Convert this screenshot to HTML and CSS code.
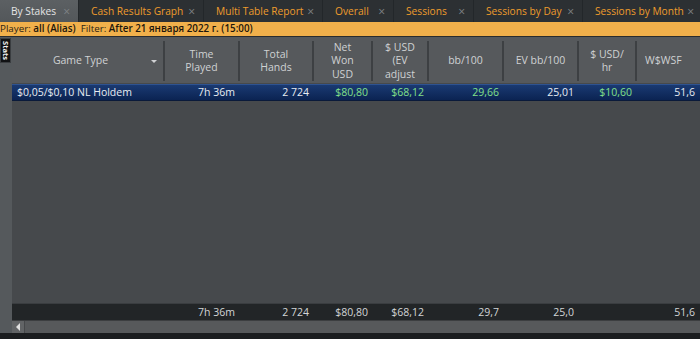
FILE: index.html
```html
<!DOCTYPE html>
<html lang="en">
<head>
  <meta charset="UTF-8">
  <title>By Stakes</title>
  <link rel="stylesheet" href="styles.css">
</head>
<body>
<div class="tabs">
  <div class="tab tab-active">By Stakes <span class="tab-close">&times;</span></div>
  <div class="tab tab-w1">Cash Results Graph <span class="tab-close">&times;</span></div>
  <div class="tab tab-w2">Multi Table Report <span class="tab-close">&times;</span></div>
  <div class="tab tab-w3">Overall <span class="tab-close">&times;</span></div>
  <div class="tab tab-w4">Sessions <span class="tab-close">&times;</span></div>
  <div class="tab tab-w5">Sessions by Day <span class="tab-close">&times;</span></div>
  <div class="tab tab-w6">Sessions by Month <span class="tab-close">&times;</span></div>
</div>

<div class="filter-bar">
  Player: <b>all (Alias)</b>&nbsp; Filter: <b>After 21 января 2022 г. (15:00)</b>
</div>

<div class="main">
  <div class="side">
    <div class="side-tab">Stats</div>
  </div>

  <div class="report">
    <div class="row head-row">
      <div class="cell col1 head-cell head-game">Game Type <span class="sort-arrow"></span></div>
      <div class="cell col2 head-cell">Time<br>Played</div>
      <div class="cell col3 head-cell">Total<br>Hands</div>
      <div class="cell col4 head-cell head-three">Net<br>Won<br>USD</div>
      <div class="cell col5 head-cell head-three">$ USD<br>(EV<br>adjust</div>
      <div class="cell col6 head-cell">bb/100</div>
      <div class="cell col7 head-cell">EV bb/100</div>
      <div class="cell col8 head-cell">$ USD/<br>hr</div>
      <div class="cell col9 head-cell head-last">W$WSF</div>
    </div>

    <div class="row data-row selected">
      <div class="cell col1 text-left">$0,05/$0,10 NL Holdem</div>
      <div class="cell col2">7h 36m</div>
      <div class="cell col3">2 724</div>
      <div class="cell col4 money">$80,80</div>
      <div class="cell col5 money">$68,12</div>
      <div class="cell col6 money">29,66</div>
      <div class="cell col7">25,01</div>
      <div class="cell col8 money">$10,60</div>
      <div class="cell col9">51,6</div>
    </div>

    <div class="body-space"></div>

    <div class="row total-row">
      <div class="cell col1"></div>
      <div class="cell col2">7h 36m</div>
      <div class="cell col3">2 724</div>
      <div class="cell col4">$80,80</div>
      <div class="cell col5">$68,12</div>
      <div class="cell col6">29,7</div>
      <div class="cell col7">25,0</div>
      <div class="cell col8"></div>
      <div class="cell col9">51,6</div>
    </div>

    <div class="hscroll">
      <div class="hscroll-btn"><span class="hscroll-arrow"></span></div>
      <div class="hscroll-track"></div>
    </div>
  </div>
</div>
<div class="bottom-line"></div>
</body>
</html>
```

FILE: styles.css
```css
body {
  margin: 0;
  width: 700px;
  height: 339px;
  overflow: hidden;
  background: #2b2e30;
  font-family: "Open Sans", "Noto Sans", sans-serif;
  font-size: 10px;
  color: #d8d8d8;
}

/* tabs */
.tabs {
  display: flex;
  height: 22px;
  background: #2c3033;
  white-space: nowrap;
}

.tab {
  display: flex;
  align-items: center;
  justify-content: space-between;
  box-sizing: border-box;
  padding: 0 8px 0 12px;
  color: #ee9c2c;
  font-size: 10.2px;
  border-right: 1px solid #23272a;
  flex-shrink: 0;
}

.tab-active {
  width: 79px;
  padding-left: 11px;
  background: linear-gradient(#5c6063, #53575a);
  color: #e4e4e4;
}

.tab-w1 { width: 125px; }
.tab-w2 { width: 119px; }
.tab-w3 { width: 71px; }
.tab-w4 { width: 80px; }
.tab-w5 { width: 109px; }
.tab-w6 { width: 120px; }

.tab-close {
  color: #7f8386;
  font-size: 12px;
}

/* filter */
.filter-bar {
  height: 14px;
  line-height: 14px;
  background: #f1b04b;
  color: #2a2214;
  font-size: 9.8px;
  border-bottom: 1px solid #2a2c2e;
  white-space: nowrap;
}

.filter-bar b {
  font-weight: 600;
  color: #1c160c;
}

/* main */
.main {
  display: flex;
  height: 296px;
}

.side {
  width: 12px;
  background: #55595c;
  padding-top: 1px;
  flex-shrink: 0;
}

.side-tab {
  box-sizing: border-box;
  width: 11px;
  height: 25px;
  background: #111214;
  border: 1px solid #3a3d40;
  color: #f0f0f0;
  font-size: 7.5px;
  font-weight: 700;
  writing-mode: vertical-rl;
  text-align: center;
  line-height: 9px;
}

.report {
  flex: 1;
  display: flex;
  flex-direction: column;
  background: #46494c;
  overflow: hidden;
}

.row {
  display: flex;
  flex-shrink: 0;
}

.cell {
  box-sizing: border-box;
  flex-shrink: 0;
  text-align: right;
  padding-right: 5px;
  white-space: nowrap;
}

.col1 { width: 153px; }
.col2 { width: 75px; }
.col3 { width: 74px; }
.col4 { width: 59px; }
.col5 { width: 56px; }
.col6 { width: 75px; }
.col7 { width: 75px; }
.col8 { width: 58px; }
.col9 { width: 63px; }

/* header */
.head-row {
  height: 46px;
  background: #56595c;
  padding: 4px 0 2px;
  box-sizing: border-box;
}

.head-cell {
  display: flex;
  align-items: center;
  justify-content: center;
  text-align: center;
  padding: 0;
  font-size: 10.5px;
  line-height: 13.5px;
  color: #cfd1d3;
  border-right: 2px solid #3d4043;
  overflow: hidden;
}

.head-three {
  line-height: 13.3px;
}

.head-game {
  position: relative;
  padding-right: 14px;
}

.head-last {
  border-right: none;
  justify-content: flex-start;
  padding-left: 8px;
}

.sort-arrow {
  position: absolute;
  right: 6px;
  top: 19px;
  width: 0;
  height: 0;
  border-left: 3px solid transparent;
  border-right: 3px solid transparent;
  border-top: 3px solid #d0d2d4;
}

/* rows */
.data-row {
  height: 17px;
  line-height: 15px;
  margin-top: 1px;
  font-size: 10.5px;
}

.selected {
  background: linear-gradient(#1a3a72, #0b2352);
  border-top: 1px solid #2f5390;
  border-bottom: 1px solid #0a1a3a;
  box-sizing: border-box;
  color: #e8ecf2;
}

.text-left {
  text-align: left;
  padding-left: 5px;
}

.money {
  color: #82e08a;
}

.body-space {
  flex: 1;
}

.total-row {
  height: 17px;
  line-height: 16px;
  font-size: 10.5px;
  background: #222527;
  color: #d3d5d7;
  border-top: 1px solid #3a3d40;
  box-sizing: border-box;
}

/* scrollbar */
.hscroll {
  display: flex;
  height: 13px;
  box-sizing: border-box;
  background: #57595b;
  border-top: 1px solid #3c3e40;
}

.hscroll-btn {
  width: 12px;
  display: flex;
  align-items: center;
  justify-content: center;
  background: #626466;
  border-right: 1px solid #46484a;
}

.hscroll-arrow {
  width: 0;
  height: 0;
  border-top: 4px solid transparent;
  border-bottom: 4px solid transparent;
  border-right: 4px solid #e0e0e0;
}

.hscroll-track {
  flex: 1;
}

.bottom-line {
  height: 6px;
  background: #1b1d1f;
}
```
